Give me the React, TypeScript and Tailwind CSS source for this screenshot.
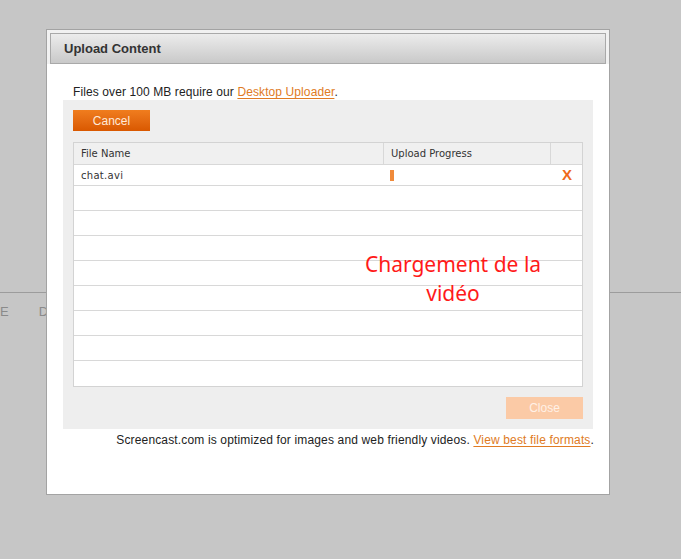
import React from "react";

const emptyRows = Array.from({ length: 8 }, (_, i) => i);

function Link({ children }: { children: React.ReactNode }) {
  return <span className="text-[#e07b24] underline underline-offset-2">{children}</span>;
}

export default function App() {
  return (
    <div className="relative h-[559px] w-[681px] overflow-hidden bg-[#c6c6c6] font-['Liberation_Sans',Arial,sans-serif]">
      {/* page behind the overlay */}
      <div className="h-[293px] border-b border-[#9c9c9c]" />
      <div className="flex gap-[30px] pt-[9px] text-[13px] text-[#8a8a8a]">
        <span>E</span>
        <span>D</span>
      </div>

      {/* dialog */}
      <div className="absolute left-[46px] top-[29px] flex h-[466px] w-[564px] flex-col border border-[#a3a3a3] bg-white">
        <div className="border-x-[3px] border-t-[3px] border-[#f1f1f1]">
          <div className="flex h-[31px] items-center border border-[#a9a9a9] bg-gradient-to-b from-[#ececec] to-[#c9c9c9] pl-[13px] text-[13px] font-bold text-[#333]">
            Upload Content
          </div>
        </div>

        <div className="flex flex-col pl-[16px] pt-[20px]">
          <p className="pl-[10px] text-[12px] leading-[16px] tracking-[0.1px] text-[#222]">
            Files over 100 MB require our <Link>Desktop Uploader</Link>.
          </p>

          <div className="flex w-[530px] flex-col bg-[#eeeeee] px-[10px] pb-[10px] pt-[10px]">
            <button className="h-[21px] w-[77px] bg-gradient-to-b from-[#f07d1e] to-[#d95800] text-[12px] text-[#ffe9d8]">
              Cancel
            </button>

            <div className="mt-[11px] flex flex-col border border-[#d3d3d3] bg-white font-['DejaVu_Sans',Verdana,sans-serif] text-[10px] text-[#333]">
              <div className="flex h-[21px] bg-[#f0f0f0]">
                <div className="flex w-[310px] items-center border-r border-[#d8d8d8] pl-[7px]">File Name</div>
                <div className="flex w-[167px] items-center border-r border-[#d8d8d8] pl-[7px]">Upload Progress</div>
                <div className="flex-1" />
              </div>
              <div className="flex h-[22px] items-center border-y border-[#d8d8d8]">
                <div className="w-[310px] pl-[7px] tracking-[0.3px]">chat.avi</div>
                <div className="flex w-[167px] items-center pl-[6px]">
                  <span className="h-[11px] w-[4px] bg-[#f08a3a]" />
                </div>
                <div className="flex-1 pl-[11px] font-['Liberation_Sans',Arial,sans-serif] text-[15px] font-bold text-[#ee6a1a]">X</div>
              </div>
              {emptyRows.map((r) => (
                <div key={r} className="h-[25px] border-b border-[#d8d8d8] last:border-b-0" />
              ))}
            </div>

            <div className="mt-[10px] flex justify-end">
              <button className="h-[22px] w-[77px] bg-[#fbcaa6] text-[12px] text-[#fff1e6]">Close</button>
            </div>
          </div>

          <p className="mt-[2px] w-[531px] text-right text-[12px] leading-[18px] tracking-[0.15px] text-[#222]">
            Screencast.com is optimized for images and web friendly videos. <Link>View best file formats</Link>.
          </p>
        </div>
      </div>

      {/* annotation */}
      <div className="absolute left-[343px] top-[250px] w-[220px] text-center font-['Comic_Sans_MS','Noto_Sans',sans-serif] text-[21px] leading-[29px] text-[#ff1a1a]">
        Chargement de la
        <br />
        vidéo
      </div>
    </div>
  );
}
